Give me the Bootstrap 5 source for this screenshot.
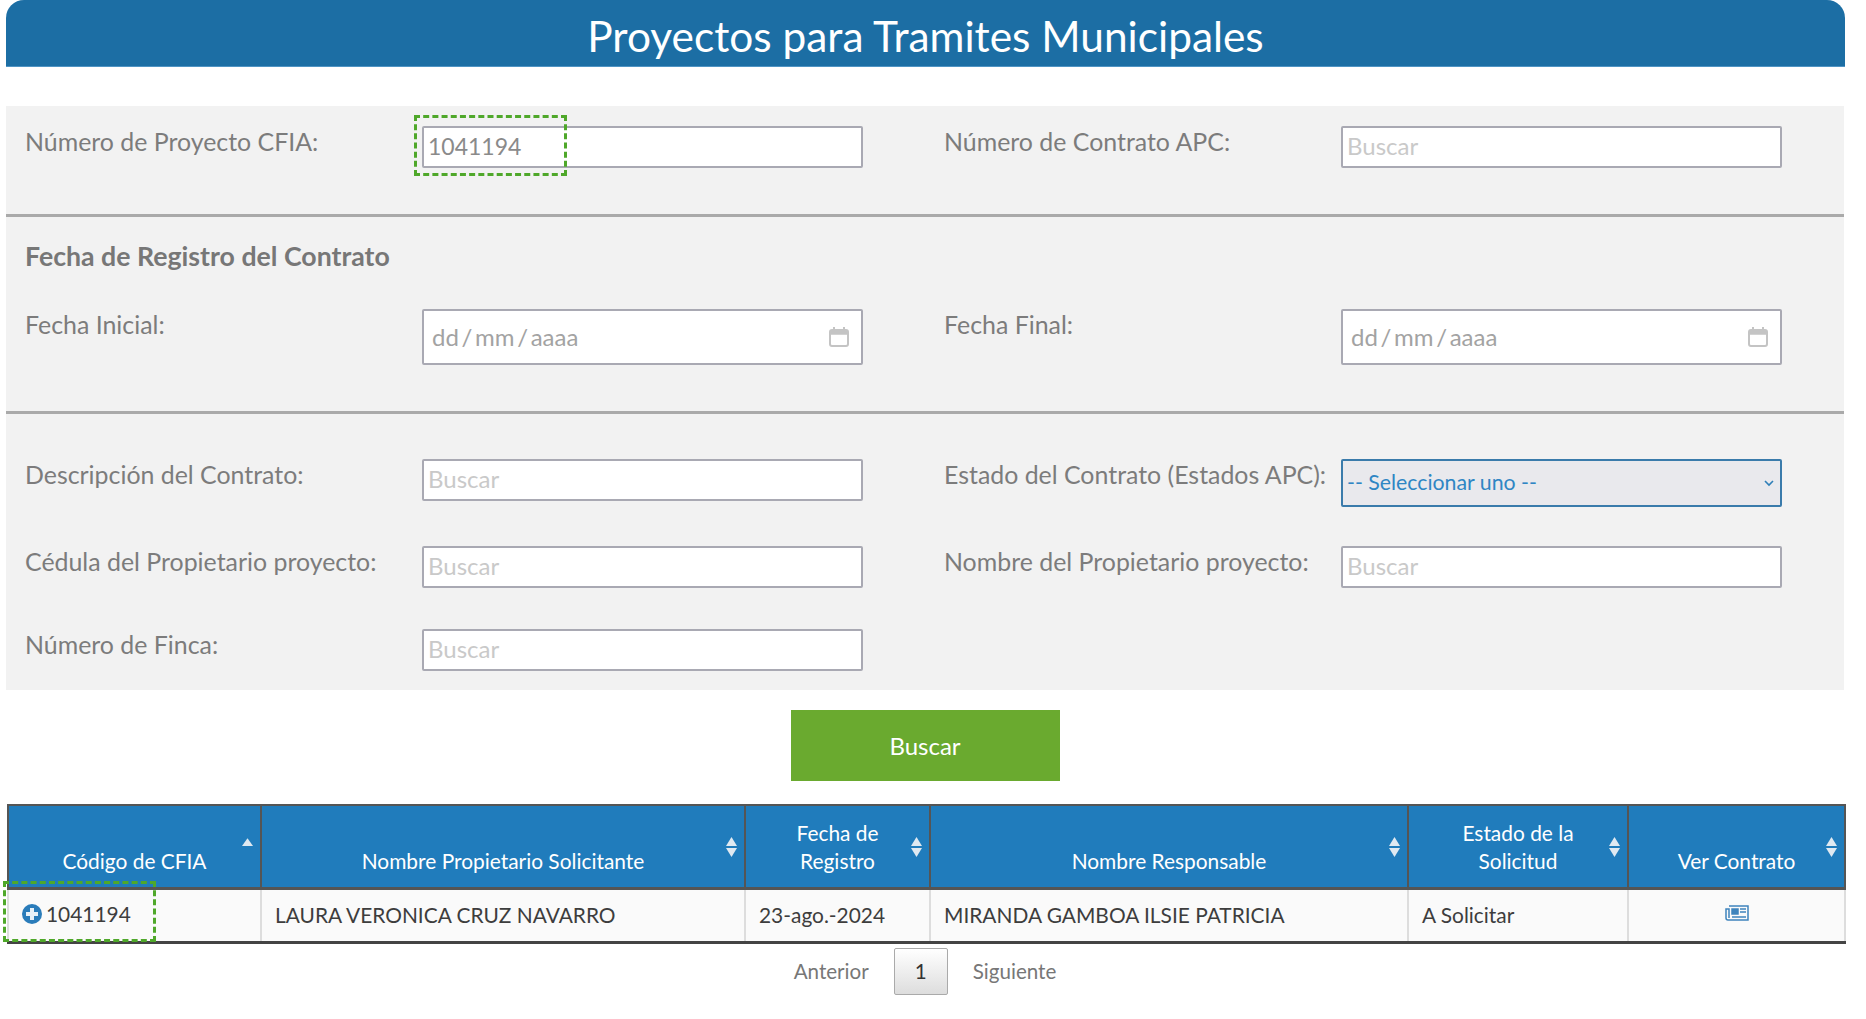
<!DOCTYPE html>
<html lang="es">
<head>
<meta charset="utf-8">
<title>Proyectos para Tramites Municipales</title>
<link href="https://cdn.jsdelivr.net/npm/bootstrap@5.3.0/dist/css/bootstrap.min.css" rel="stylesheet">
<style>
html,body{background:#fff;}
body{font-family:"Lato","Open Sans",sans-serif;color:#555;overflow:hidden;}
.page-wrap{width:1866px;height:1019px;}
.title-bar{margin:0 21px 0 6px;height:67px;background:#1c6ea4;border-top-left-radius:18px;border-top-right-radius:18px;color:#fff;font-size:42.4px;font-weight:400;line-height:71px;text-align:center;border-bottom:1px solid #4f94c4;}
.filter-panel{margin:39px 22px 0 6px;height:584px;background:#f2f2f2;color:#7c7c7c;font-size:24.9px;}
.filter-row{--bs-gutter-x:0;}
.filter-cell{padding-left:19px;display:flex;align-items:flex-start;}
.filter-label{width:397px;flex:none;line-height:28px;padding-top:1px;white-space:nowrap;}
.filter-field{width:441px;flex:none;position:relative;}
.txt-field{display:block;width:100%;height:42px;border:2px solid #a9a9b3;border-radius:2px;background:#fff;padding:0 4px 3px;font-size:24px;color:#8a8a8a;outline:0;}
.val-field{font-size:23px;}
.txt-field::placeholder{color:#c9c9c9;opacity:1;}
.date-field{height:56px;border:2px solid #a9a9b3;border-radius:2px;background:#fff;padding:0 12px 0 8px;font-size:24px;color:#a3a3a3;word-spacing:-3.5px;}
.sel-field{display:flex;height:48px;border:2px solid #3a7bab;border-radius:2px;background:#e9e9ed;color:#2f86c4;font-size:21.3px;padding:0 6px 0 4px;}
.sep{height:3px;background:#aaa;border:0;opacity:1;margin:0;}
.sec-one{height:108px;padding-top:20px;}
.sec-two{height:194px;}
.sec-title{font-weight:700;font-size:26.7px;line-height:28px;padding:25px 0 0 19px;margin:0 0 39px;color:#777;}
.sec-three{padding-top:45px;}
.gap-b{margin-top:39px;}
.gap-c{margin-top:41px;}
.dash-box{position:absolute;border:3px dashed #4fa82a;width:153px;height:61px;pointer-events:none;z-index:3;}
.dash-input{left:-8px;top:-11px;}
.dash-cell{left:-6px;top:-9px;}
.act-row{padding-top:20px;height:114px;margin-left:6px;margin-right:22px;}
.btn-find{width:269px;height:71px;background:#6aaa2f;border:0;border-radius:0;color:#fff;font-size:24px;}
.res-wrap{margin:0 21px 0 7px;position:relative;}
.res-table{table-layout:fixed;width:1837px;margin:0;border-collapse:collapse;font-size:20.9px;}
.res-table th{background:#207cbc;color:#fff;font-weight:400;text-align:center;vertical-align:bottom;border:2px solid #555;border-bottom:3px solid #555;padding:0 8px 12px;height:83px;line-height:28px;position:relative;}
.res-table td{background:#fafafa;color:#3d3d3d;height:54px;padding:0 13px;vertical-align:middle;border-left:2px solid #ddd;border-right:2px solid #ddd;border-bottom:3px solid #444;border-top:0;line-height:28px;white-space:nowrap;position:relative;}
.sort-ico{position:absolute;right:7px;top:30px;width:11px;height:22px;}
.doc-ico{display:block;margin:-4px auto 0;}
.pager-row{padding-top:4px;height:60px;font-size:20.6px;color:#777;}
.pg-num{width:54px;height:47px;display:flex;align-items:center;justify-content:center;border:1px solid #aaa;border-radius:2px;background:linear-gradient(#fff,#ddd);color:#333;}
.pg-link{line-height:47px;}
.pg-gap{gap:25px;margin-right:16px;}
</style>
</head>
<body>
<div class="page-wrap">
  <h1 class="title-bar">Proyectos para Tramites Municipales</h1>
  <form class="filter-panel">
    <div class="sec-one">
      <div class="row filter-row">
        <div class="col-6 filter-cell">
          <label class="filter-label">Número de Proyecto CFIA:</label>
          <div class="filter-field">
            <input class="txt-field val-field" type="text" value="1041194">
            <span class="dash-box dash-input"></span>
          </div>
        </div>
        <div class="col-6 filter-cell">
          <label class="filter-label">Número de Contrato APC:</label>
          <div class="filter-field"><input class="txt-field" type="text" placeholder="Buscar"></div>
        </div>
      </div>
    </div>
    <hr class="sep">
    <div class="sec-two">
      <p class="sec-title">Fecha de Registro del Contrato</p>
      <div class="row filter-row">
        <div class="col-6 filter-cell">
          <label class="filter-label">Fecha Inicial:</label>
          <div class="filter-field">
            <div class="date-field d-flex align-items-center justify-content-between">
              <span>dd / mm / aaaa</span>
              <svg width="20" height="20" viewBox="0 0 20 20" fill="none" stroke="#c4c4c4" stroke-width="2"><rect x="1" y="3" width="18" height="16" rx="2"/><path d="M1 5h18M1 6.5h18" stroke-width="2.5"/><path d="M5 0v4M15 0v4"/></svg>
            </div>
          </div>
        </div>
        <div class="col-6 filter-cell">
          <label class="filter-label">Fecha Final:</label>
          <div class="filter-field">
            <div class="date-field d-flex align-items-center justify-content-between">
              <span>dd / mm / aaaa</span>
              <svg width="20" height="20" viewBox="0 0 20 20" fill="none" stroke="#c4c4c4" stroke-width="2"><rect x="1" y="3" width="18" height="16" rx="2"/><path d="M1 5h18M1 6.5h18" stroke-width="2.5"/><path d="M5 0v4M15 0v4"/></svg>
            </div>
          </div>
        </div>
      </div>
    </div>
    <hr class="sep">
    <div class="sec-three">
      <div class="row filter-row">
        <div class="col-6 filter-cell">
          <label class="filter-label">Descripción del Contrato:</label>
          <div class="filter-field"><input class="txt-field" type="text" placeholder="Buscar"></div>
        </div>
        <div class="col-6 filter-cell">
          <label class="filter-label">Estado del Contrato (Estados APC):</label>
          <div class="filter-field">
            <div class="sel-field align-items-center justify-content-between">
              <span>-- Seleccionar uno --</span>
              <svg width="10" height="7" viewBox="0 0 10 7" fill="none" stroke="#2f7fb8" stroke-width="1.6"><path d="M1 1l4 4 4-4"/></svg>
            </div>
          </div>
        </div>
      </div>
      <div class="row filter-row gap-b">
        <div class="col-6 filter-cell">
          <label class="filter-label">Cédula del Propietario proyecto:</label>
          <div class="filter-field"><input class="txt-field" type="text" placeholder="Buscar"></div>
        </div>
        <div class="col-6 filter-cell">
          <label class="filter-label">Nombre del Propietario proyecto:</label>
          <div class="filter-field"><input class="txt-field" type="text" placeholder="Buscar"></div>
        </div>
      </div>
      <div class="row filter-row gap-c">
        <div class="col-6 filter-cell">
          <label class="filter-label">Número de Finca:</label>
          <div class="filter-field"><input class="txt-field" type="text" placeholder="Buscar"></div>
        </div>
      </div>
    </div>
  </form>
  <div class="act-row d-flex justify-content-center align-items-start">
    <button type="button" class="btn btn-find">Buscar</button>
  </div>
  <div class="res-wrap">
    <table class="res-table">
      <colgroup><col style="width:253px"><col style="width:484px"><col style="width:185px"><col style="width:478px"><col style="width:220px"><col style="width:217px"></colgroup>
      <thead>
        <tr>
          <th>Código de CFIA<svg class="sort-ico" viewBox="0 0 10 20"><path d="M5 2l5 7H0z" fill="#dfe9f1"/></svg></th>
          <th>Nombre Propietario Solicitante<svg class="sort-ico" viewBox="0 0 10 20"><path d="M5 1l5 8H0z" fill="#dfe9f1"/><path d="M5 19l5-8H0z" fill="#dfe9f1"/></svg></th>
          <th>Fecha de<br>Registro<svg class="sort-ico" viewBox="0 0 10 20"><path d="M5 1l5 8H0z" fill="#dfe9f1"/><path d="M5 19l5-8H0z" fill="#dfe9f1"/></svg></th>
          <th>Nombre Responsable<svg class="sort-ico" viewBox="0 0 10 20"><path d="M5 1l5 8H0z" fill="#dfe9f1"/><path d="M5 19l5-8H0z" fill="#dfe9f1"/></svg></th>
          <th>Estado de la<br>Solicitud<svg class="sort-ico" viewBox="0 0 10 20"><path d="M5 1l5 8H0z" fill="#dfe9f1"/><path d="M5 19l5-8H0z" fill="#dfe9f1"/></svg></th>
          <th>Ver Contrato<svg class="sort-ico" viewBox="0 0 10 20"><path d="M5 1l5 8H0z" fill="#dfe9f1"/><path d="M5 19l5-8H0z" fill="#dfe9f1"/></svg></th>
        </tr>
      </thead>
      <tbody>
        <tr>
          <td>
            <span class="d-inline-flex align-items-center gap-1">
              <svg width="20" height="20" viewBox="0 0 20 20"><circle cx="10" cy="10" r="10" fill="#2a7cba"/><path d="M8 4h4v4h4v4h-4v4H8v-4H4V8h4z" fill="#e8f1f8"/></svg>
              <span>1041194</span>
            </span>
            <span class="dash-box dash-cell"></span>
          </td>
          <td>LAURA VERONICA CRUZ NAVARRO</td>
          <td>23-ago.-2024</td>
          <td>MIRANDA GAMBOA ILSIE PATRICIA</td>
          <td>A Solicitar</td>
          <td>
            <svg class="doc-ico" width="24" height="16" viewBox="0 0 24 16" fill="none" stroke="#3f84bd" stroke-width="1.5"><path d="M4 1h19v14H3a2 2 0 0 1-2-2V4h3v9"/><rect x="7" y="4" width="6" height="5" fill="#3f84bd"/><path d="M15 4h6M15 7h6M7 12h14"/></svg>
          </td>
        </tr>
      </tbody>
    </table>
  </div>
  <div class="pager-row d-flex justify-content-center align-items-start pg-gap">
    <span class="pg-link">Anterior</span>
    <span class="pg-num">1</span>
    <span class="pg-link">Siguiente</span>
  </div>
</div>
<script src="https://cdn.jsdelivr.net/npm/bootstrap@5.3.0/dist/js/bootstrap.bundle.min.js"></script>
</body>
</html>
